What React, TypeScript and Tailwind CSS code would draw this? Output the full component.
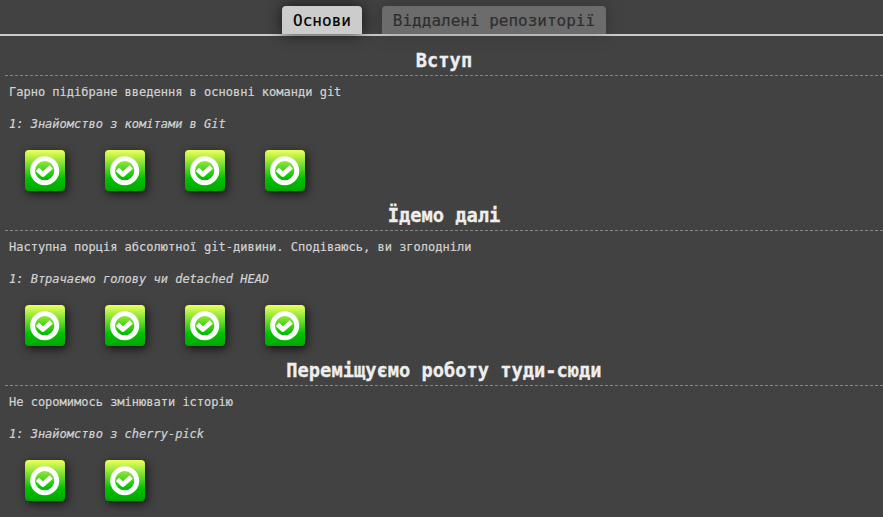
type Section = { title: string; about: string; first: string; levels: number };

const sections: Section[] = [
  { title: 'Вступ', about: 'Гарно підібране введення в основні команди git', first: '1: Знайомство з комітами в Git', levels: 4 },
  { title: 'Їдемо далі', about: 'Наступна порція абсолютної git-дивини. Сподіваюсь, ви зголодніли', first: '1: Втрачаємо голову чи detached HEAD', levels: 4 },
  { title: 'Переміщуємо роботу туди-сюди', about: 'Не соромимось змінювати історію', first: '1: Знайомство з cherry-pick', levels: 2 },
];

function LevelIcon() {
  return (
    <div className="flex h-[41px] w-10 items-center justify-center rounded-[4px] bg-[linear-gradient(to_bottom,#f0ff5c,#00c000_70%,#00a800)] shadow-[2px_3px_10px_rgba(0,0,0,0.7)]">
      <svg width="30" height="30" viewBox="0 0 30 30" fill="none" stroke="#fff">
        <circle cx="14.7" cy="14.7" r="12.1" strokeWidth="4.9" />
        <path d="M7.4 13.4 L12.9 18.5 L21.3 10.9" strokeWidth="4.7" strokeLinejoin="round" />
      </svg>
    </div>
  );
}

function SectionBlock({ title, about, first, levels }: Section) {
  return (
    <section className="h-[155px]">
      <h3 className="ml-[5px] h-[31px] border-b border-dashed border-[#858585] text-center text-[18.72px] leading-[32px] font-bold text-[#eee] [-webkit-text-stroke:0.3px]">
        {title}
      </h3>
      <p className="ml-[9px] h-8 text-xs leading-8 text-[#d2d2d2] [-webkit-text-stroke:0.2px]">{about}</p>
      <p className="ml-[9px] h-8 text-xs leading-8 text-[#d2d2d2] italic [-webkit-text-stroke:0.2px]">{first}</p>
      <div className="mt-[10px] ml-[25px] flex gap-10">
        {Array.from({ length: levels }, (_, i) => (
          <LevelIcon key={i} />
        ))}
      </div>
    </section>
  );
}

export default function App() {
  return (
    <main className="h-[517px] w-full overflow-hidden bg-[#424242] font-['DejaVu_Sans_Mono',monospace]">
      <nav className="flex h-9 items-end justify-center gap-5 border-b-2 border-[#ccc] pl-[5px]">
        <div className="h-7 w-20 rounded-t-[4px] bg-[#ccc] text-center text-base leading-[29px] text-black shadow-[0_0_15px_rgba(0,0,0,0.7)] [-webkit-text-stroke:0.2px]">
          Основи
        </div>
        <div className="h-7 w-56 rounded-t-[4px] bg-[#ccc] text-center text-base leading-[29px] whitespace-nowrap text-black opacity-30 shadow-[0_0_15px_rgba(0,0,0,0.7)] [-webkit-text-stroke:0.2px]">
          Віддалені репозиторії
        </div>
      </nav>
      <div className="pt-[9px]">
        {sections.map((s) => (
          <SectionBlock key={s.title} {...s} />
        ))}
      </div>
    </main>
  );
}
